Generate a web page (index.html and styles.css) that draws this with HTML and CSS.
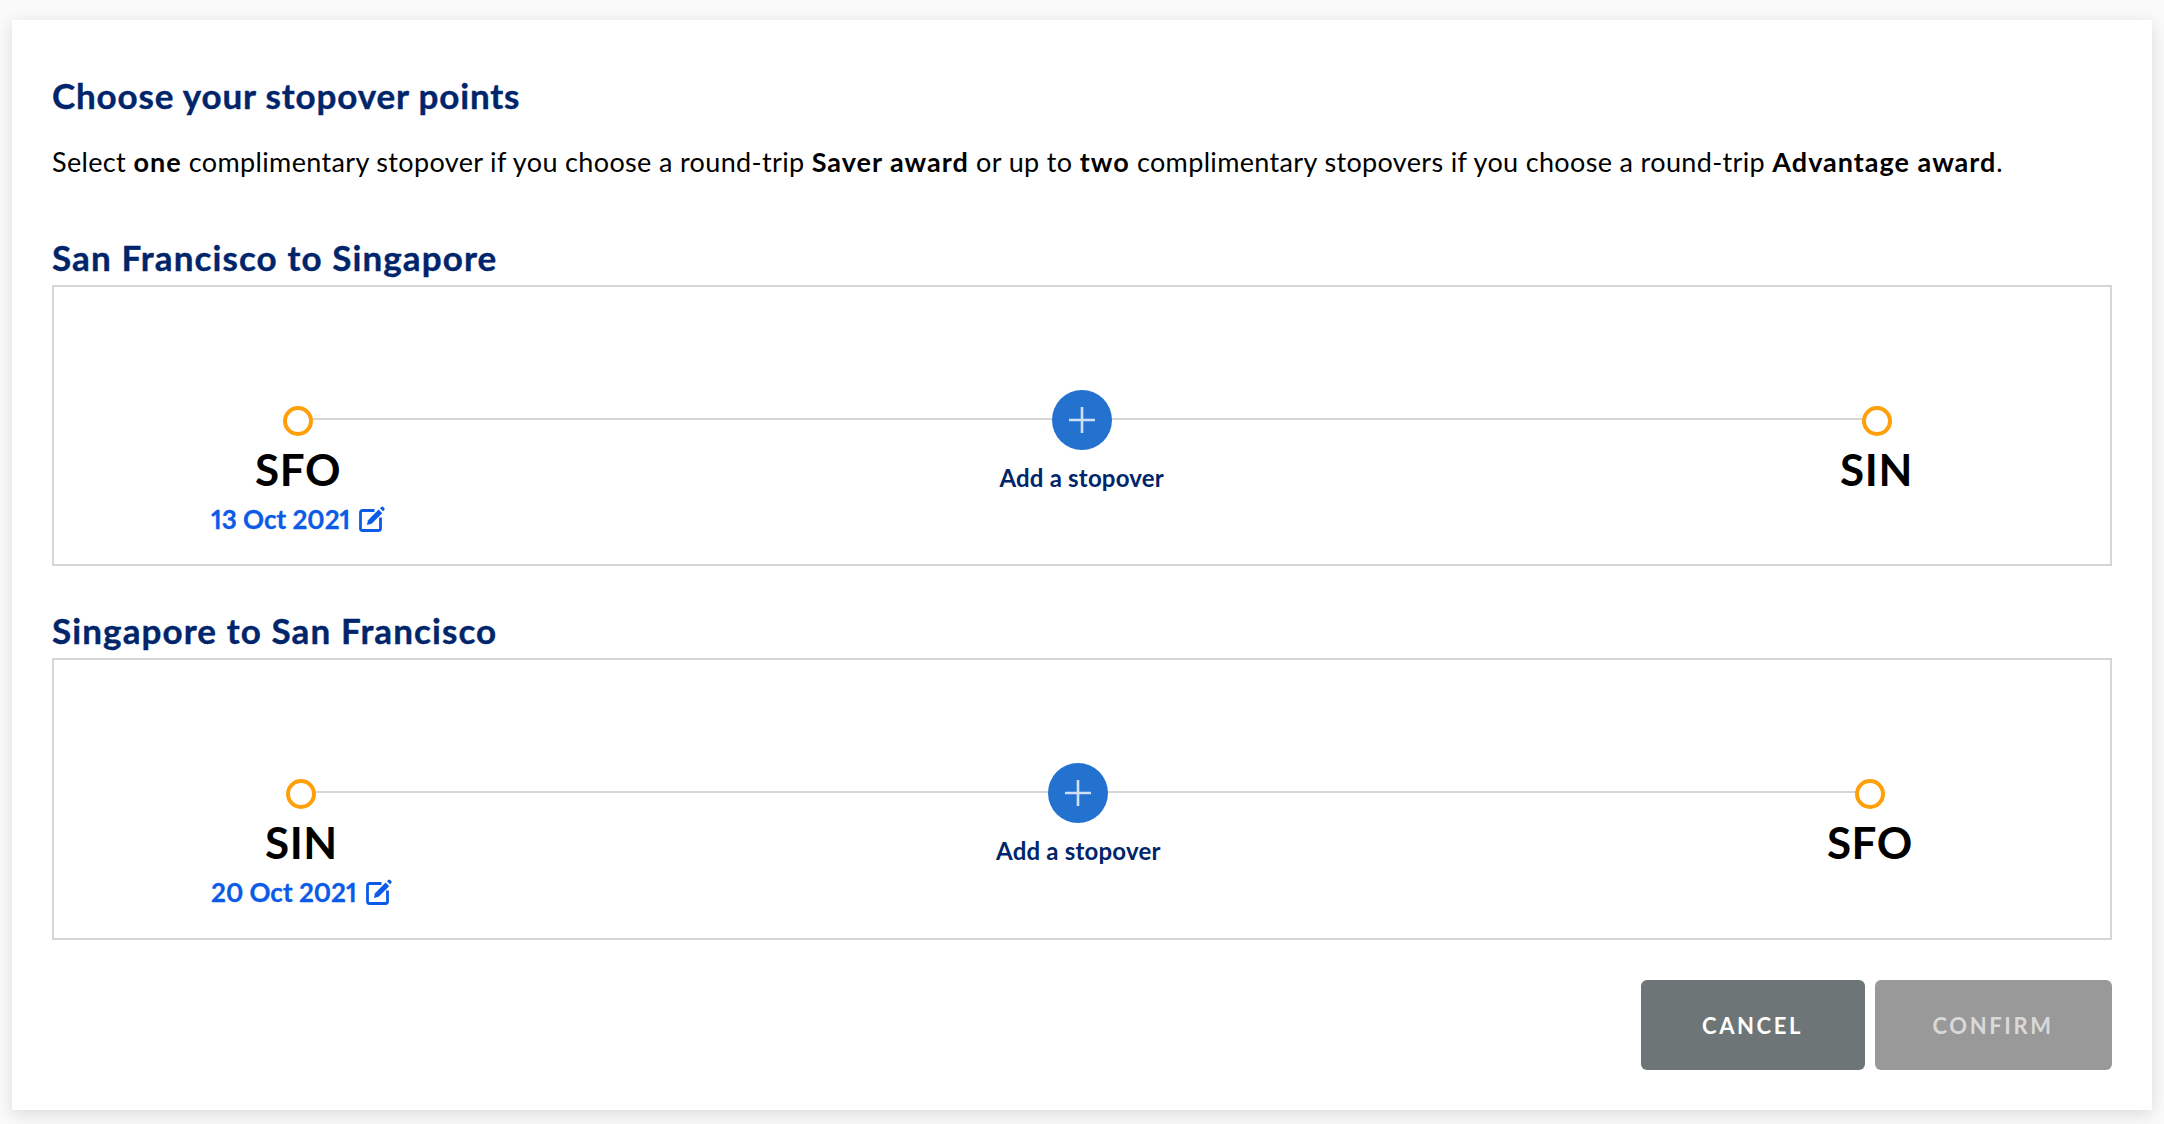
FILE: index.html
```html
<!DOCTYPE html>
<html lang="en">
<head>
<meta charset="utf-8">
<title>Choose your stopover points</title>
<link rel="stylesheet" href="styles.css">
</head>
<body>
<main class="card">
  <h1 class="title">Choose your stopover points</h1>
  <p class="intro">Select <b>one</b> complimentary stopover if you choose a round-trip <b>Saver award</b> or up to <b>two</b> complimentary stopovers if you choose a round-trip <b>Advantage award</b>.</p>

  <section class="leg">
    <h2 class="leg-title">San Francisco to Singapore</h2>
    <div class="route route-out">
      <div class="stop">
        <span class="dot"></span>
        <span class="code">SFO</span>
        <a class="date">13 Oct 2021 <svg class="edit" viewBox="0 0 26 26"><use href="#edit-icon"/></svg></a>
      </div>
      <div class="add">
        <span class="plus"><svg viewBox="0 0 28 28"><path d="M14 1v26M1 14h26"/></svg></span>
        <span class="add-label">Add a stopover</span>
      </div>
      <div class="stop">
        <span class="dot"></span>
        <span class="code">SIN</span>
      </div>
    </div>
  </section>

  <section class="leg">
    <h2 class="leg-title">Singapore to San Francisco</h2>
    <div class="route route-back">
      <div class="stop">
        <span class="dot"></span>
        <span class="code">SIN</span>
        <a class="date">20 Oct 2021 <svg class="edit" viewBox="0 0 26 26"><use href="#edit-icon"/></svg></a>
      </div>
      <div class="add">
        <span class="plus"><svg viewBox="0 0 28 28"><path d="M14 1v26M1 14h26"/></svg></span>
        <span class="add-label">Add a stopover</span>
      </div>
      <div class="stop">
        <span class="dot"></span>
        <span class="code">SFO</span>
      </div>
    </div>
  </section>

  <div class="actions">
    <button class="btn btn-cancel">CANCEL</button>
    <button class="btn btn-confirm">CONFIRM</button>
  </div>
</main>
<svg class="defs" width="0" height="0">
  <symbol id="edit-icon" viewBox="0 0 26 26">
    <path d="M15.5 4.5H3.5a2 2 0 0 0-2 2v16a2 2 0 0 0 2 2h16a2 2 0 0 0 2-2V11.5" fill="none" stroke="currentColor" stroke-width="2.8"/>
    <path d="M19.6 3.6l3.6 3.6L12.6 17.8l-4.7 1.1 1.1-4.7z" fill="currentColor"/>
    <path d="M21 2.2l1.2-1.2a1.5 1.5 0 0 1 2.1 0l.9.9a1.5 1.5 0 0 1 0 2.1l-1.2 1.2z" fill="currentColor"/>
  </symbol>
</svg>
</body>
</html>
```
FILE: styles.css
```css
* { box-sizing: border-box; }
html, body { margin: 0; height: 100%; }
body {
  background: #fafafa;
  font-family: "Lato", "Liberation Sans", sans-serif;
  padding: 20px 12px 14px;
  overflow: hidden;
}
.card {
  background: #fff;
  height: 1090px;
  padding: 55px 40.5px 40px 40px;
  box-shadow: 0 4px 16px rgba(0, 0, 0, 0.13);
}
.title {
  margin: 0;
  font-size: 35px;
  line-height: 40px;
  font-weight: 700;
  color: #00256b;
  letter-spacing: 0.85px;
  -webkit-text-stroke: 0.4px #00256b;
}
.intro {
  margin: 30px 0 0;
  font-size: 27px;
  line-height: 34px;
  color: #000;
  letter-spacing: 0.35px;
}
.intro b {
  font-weight: 700;
  letter-spacing: 1px;
}
.leg-title {
  margin: 0;
  font-size: 35px;
  line-height: 40px;
  font-weight: 700;
  color: #00256b;
  letter-spacing: 1.1px;
  -webkit-text-stroke: 0.4px #00256b;
}
.leg:nth-of-type(1) { margin-top: 58px; }
.leg:nth-of-type(2) { margin-top: 44px; }
.route {
  position: relative;
  height: 281px;
  margin-top: 8px;
  border: 2px solid #d6d6d6;
  display: flex;
  justify-content: space-between;
  padding: 103px 196.5px 0 157px;
}
.route-back { height: 282px; }
.route::before {
  content: "";
  position: absolute;
  top: 131px;
  height: 2px;
  background: #d6d6d6;
}
.route-out::before { left: 243px; right: 232px; }
.route-back::before { left: 247px; right: 238px; }
.stop {
  position: relative;
  display: flex;
  flex-direction: column;
  align-items: center;
  padding-top: 16px;
}
.dot {
  width: 30px;
  height: 30px;
  border: 4.5px solid #ff9f0a;
  border-radius: 50%;
  background: #fff;
}
.code {
  margin-top: 7px;
  font-size: 44px;
  line-height: 52px;
  font-weight: 700;
  color: #000;
  letter-spacing: 0.6px;
}
.date {
  display: flex;
  align-items: center;
  gap: 9px;
  margin-top: 9px;
  font-size: 26px;
  line-height: 30px;
  font-weight: 700;
  color: #0b5be8;
  white-space: nowrap;
  font-variant-numeric: proportional-nums;
  -webkit-text-stroke: 0.3px #0b5be8;
}
.edit { width: 26px; height: 26px; color: #0b5be8; }
.add {
  position: relative;
  display: flex;
  flex-direction: column;
  align-items: center;
  gap: 13px;
  margin-right: 62px;
}
.plus {
  width: 60px;
  height: 60px;
  border-radius: 50%;
  background: #2472d0;
  display: flex;
  align-items: center;
  justify-content: center;
}
.plus svg { width: 28px; height: 28px; }
.plus path { stroke: #cfe0f5; stroke-width: 2.6; fill: none; }
.add-label {
  font-size: 24px;
  line-height: 30px;
  font-weight: 700;
  color: #00256b;
  white-space: nowrap;
  letter-spacing: 0.2px;
}
.actions {
  display: flex;
  justify-content: flex-end;
  gap: 10px;
  margin-top: 40px;
}
.btn {
  height: 90px;
  border: 0;
  border-radius: 6px;
  font-family: inherit;
  font-size: 22px;
  font-weight: 700;
  letter-spacing: 2.6px;
}
.btn-cancel { width: 224px; background: #6d7577; color: #fff; }
.btn-confirm { width: 237px; background: #999; color: #d9d9d9; }
.defs { position: absolute; }
```
